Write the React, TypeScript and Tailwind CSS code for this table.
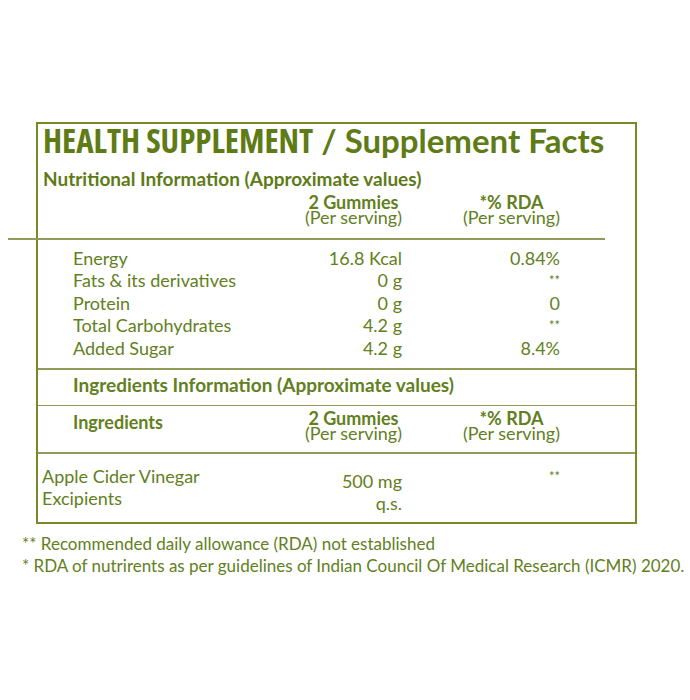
import React from 'react';

interface Row {
  name: string;
  amount: string;
  rda: string;
}

const nutrition: Row[] = [
  { name: 'Energy', amount: '16.8 Kcal', rda: '0.84%' },
  { name: 'Fats & its derivatives', amount: '0 g', rda: '**' },
  { name: 'Protein', amount: '0 g', rda: '0' },
  { name: 'Total Carbohydrates', amount: '4.2 g', rda: '**' },
  { name: 'Added Sugar', amount: '4.2 g', rda: '8.4%' },
];

const lato = { fontFamily: 'Lato, "Noto Sans", sans-serif' };
const narrow = { fontFamily: '"Open Sans", sans-serif' };

const Stars: React.FC = () => <span className="text-[13px] align-top">**</span>;

const ColHeads: React.FC = () => (
  <>
    <div className="w-[114px] text-right">
      <div className="inline-block text-center text-[18px] leading-[15px]">
        <div className="font-bold">2 Gummies</div>
        <div>(Per serving)</div>
      </div>
    </div>
    <div className="w-[158px] text-right">
      <div className="inline-block text-center text-[18px] leading-[15px]">
        <div className="font-bold">*% RDA</div>
        <div>(Per serving)</div>
      </div>
    </div>
  </>
);

const App: React.FC = () => {
  return (
    <div className="w-[690px] h-[700px] bg-white pt-[122px] text-[#62801d]" style={lato}>
      <div className="ml-[36px] w-[601px] border-2 border-[#778a28]">
        {/* title */}
        <div className="pl-[5px] h-[32px] text-[33px] font-bold leading-[32px] text-[#5e7b16] whitespace-nowrap">
          <span className="font-stretch-condensed" style={narrow}>HEALTH SUPPLEMENT</span> / Supplement Facts
        </div>
        <div className="pl-[5px] mt-[11px] h-[24px] text-[19px] font-bold leading-[24px] text-[#5e7b16]">
          Nutritional Information (Approximate values)
        </div>
        <div className="flex h-[47px] items-end pb-[8.5px]">
          <div className="w-[250px]" />
          <ColHeads />
        </div>
        <div className="-ml-[30px] w-[597px] h-[1.5px] bg-[#8e9c58]" />

        {/* nutrition rows */}
        <div className="pt-[7px] pb-[9px] text-[18px] leading-[22.5px]">
          {nutrition.map(r => (
            <div key={r.name} className="flex">
              <div className="w-[250px] pl-[35px]">{r.name}</div>
              <div className="w-[114px] text-right">{r.amount}</div>
              <div className="w-[158px] text-right">{r.rda === '**' ? <Stars /> : r.rda}</div>
            </div>
          ))}
        </div>
        <div className="h-[1.5px] bg-[#8e9c58]" />

        <div className="pl-[35px] h-[35px] text-[19px] font-bold leading-[30px]">
          Ingredients Information (Approximate values)
        </div>
        <div className="h-[1.5px] bg-[#8e9c58]" />

        <div className="flex h-[46px] items-start pt-[4.5px]">
          <div className="w-[250px] pl-[35px] mt-[0.5px] text-[18px] font-bold leading-[22px]">Ingredients</div>
          <ColHeads />
        </div>
        <div className="h-[1.5px] bg-[#8e9c58]" />

        {/* ingredients */}
        <div className="flex items-start h-[68.5px] pt-[11.5px] text-[18px] leading-[22px]">
          <div className="w-[250px] pl-[4px]">
            <div>Apple Cider Vinegar</div>
            <div>Excipients</div>
          </div>
          <div className="w-[114px] text-right pt-[4.5px]">
            <div>500 mg</div>
            <div>q.s.</div>
          </div>
          <div className="w-[158px] text-right">
            <Stars />
          </div>
        </div>
      </div>

      <div className="pl-[22px] pt-[9px] text-[17px] leading-[21.5px] whitespace-nowrap">
        <div>** Recommended daily allowance (RDA) not established</div>
        <div>* RDA of nutrirents as per guidelines of Indian Council Of Medical Research (ICMR) 2020.</div>
      </div>
    </div>
  );
};

export default App;
